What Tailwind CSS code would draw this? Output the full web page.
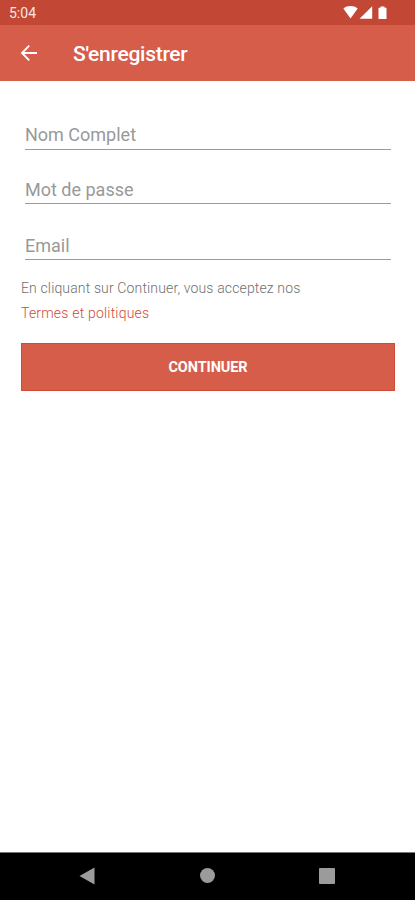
<!DOCTYPE html>
<html lang="fr">
<head>
<meta charset="utf-8">
<title>S'enregistrer</title>
<script src="https://cdn.jsdelivr.net/npm/@tailwindcss/browser@4"></script>
</head>
<body class="flex h-[900px] w-[415px] flex-col overflow-hidden bg-white font-['Roboto',sans-serif]">
  <header class="text-white">
    <div class="flex h-[25px] items-center justify-between bg-[#c24735] pl-[9px] pr-[26px]">
      <span class="pt-[1px] text-[14px] leading-none text-[#fbe6e2]">5:04</span>
      <svg class="h-[25px] w-[47px]" viewBox="0 0 47 25" fill="#fff">
        <path d="M1.300 8.500C5 5.200 12 5.200 15.700 8.500L8.500 18.500Z"/>
        <path d="M30.200 6.300V18.700H17.500Z"/>
        <path d="M36.500 7.700H38.500V6.500H42.500V7.700H44.500V19H36.500Z"/>
      </svg>
    </div>
    <div class="flex h-14 items-center bg-[#d75d4b] pl-[20px]">
      <svg class="h-[18px] w-[18px]" viewBox="0 0 18 18" fill="none" stroke="#fff" stroke-width="1.900"><path d="M17 9H2.500M9.200 1.700L2 9L9.200 16.300"/></svg>
      <h1 class="ml-[35px] pt-[2px] text-[21px] font-medium leading-none tracking-[-0.270px]">S'enregistrer</h1>
    </div>
  </header>
  <main class="flex-1 pl-[21px] pr-[20px] pt-[14px]">
    <form>
      <div class="mx-1 flex h-[55px] items-end border-b border-[#9b9b9b] pb-[4px] text-[18px] leading-[21px] text-[#999]">Nom Complet</div>
      <div class="mx-1 flex h-[54px] items-end border-b border-[#9b9b9b] pb-[3px] text-[18px] leading-[21px] text-[#999]">Mot de passe</div>
      <div class="mx-1 flex h-[56px] items-end border-b border-[#9b9b9b] pb-[3px] text-[18px] leading-[21px] text-[#999]">Email</div>
      <p class="mt-[16px] whitespace-nowrap text-[14px] font-light leading-[25px] tracking-[0.140px] text-[#6f6f6f]">En cliquant sur Continuer, vous acceptez nos<br><a class="tracking-[0.200px] text-[#d04a38]">Termes et politiques</a></p>
      <button type="button" class="mt-[17px] flex h-[48px] w-full items-center justify-center border border-[#d04a33] bg-[#d75d4b] pt-[2px] text-[14.500px] font-bold tracking-[-0.100px] text-white">CONTINUER</button>
    </form>
  </main>
  <nav class="flex h-[48px] items-center justify-between border-t border-[#777] bg-black pb-[2px] pl-[79px] pr-[80px]">
    <svg class="h-[18px] w-[16px]" viewBox="0 0 16 18" fill="#9b9b9b"><path d="M0.500 9L15.500 0.500V17.500Z"/></svg>
    <span class="h-[15px] w-[15px] rounded-full bg-[#9b9b9b]"></span>
    <span class="h-[16px] w-[16px] rounded-[1px] bg-[#9b9b9b]"></span>
  </nav>
</body>
</html>
